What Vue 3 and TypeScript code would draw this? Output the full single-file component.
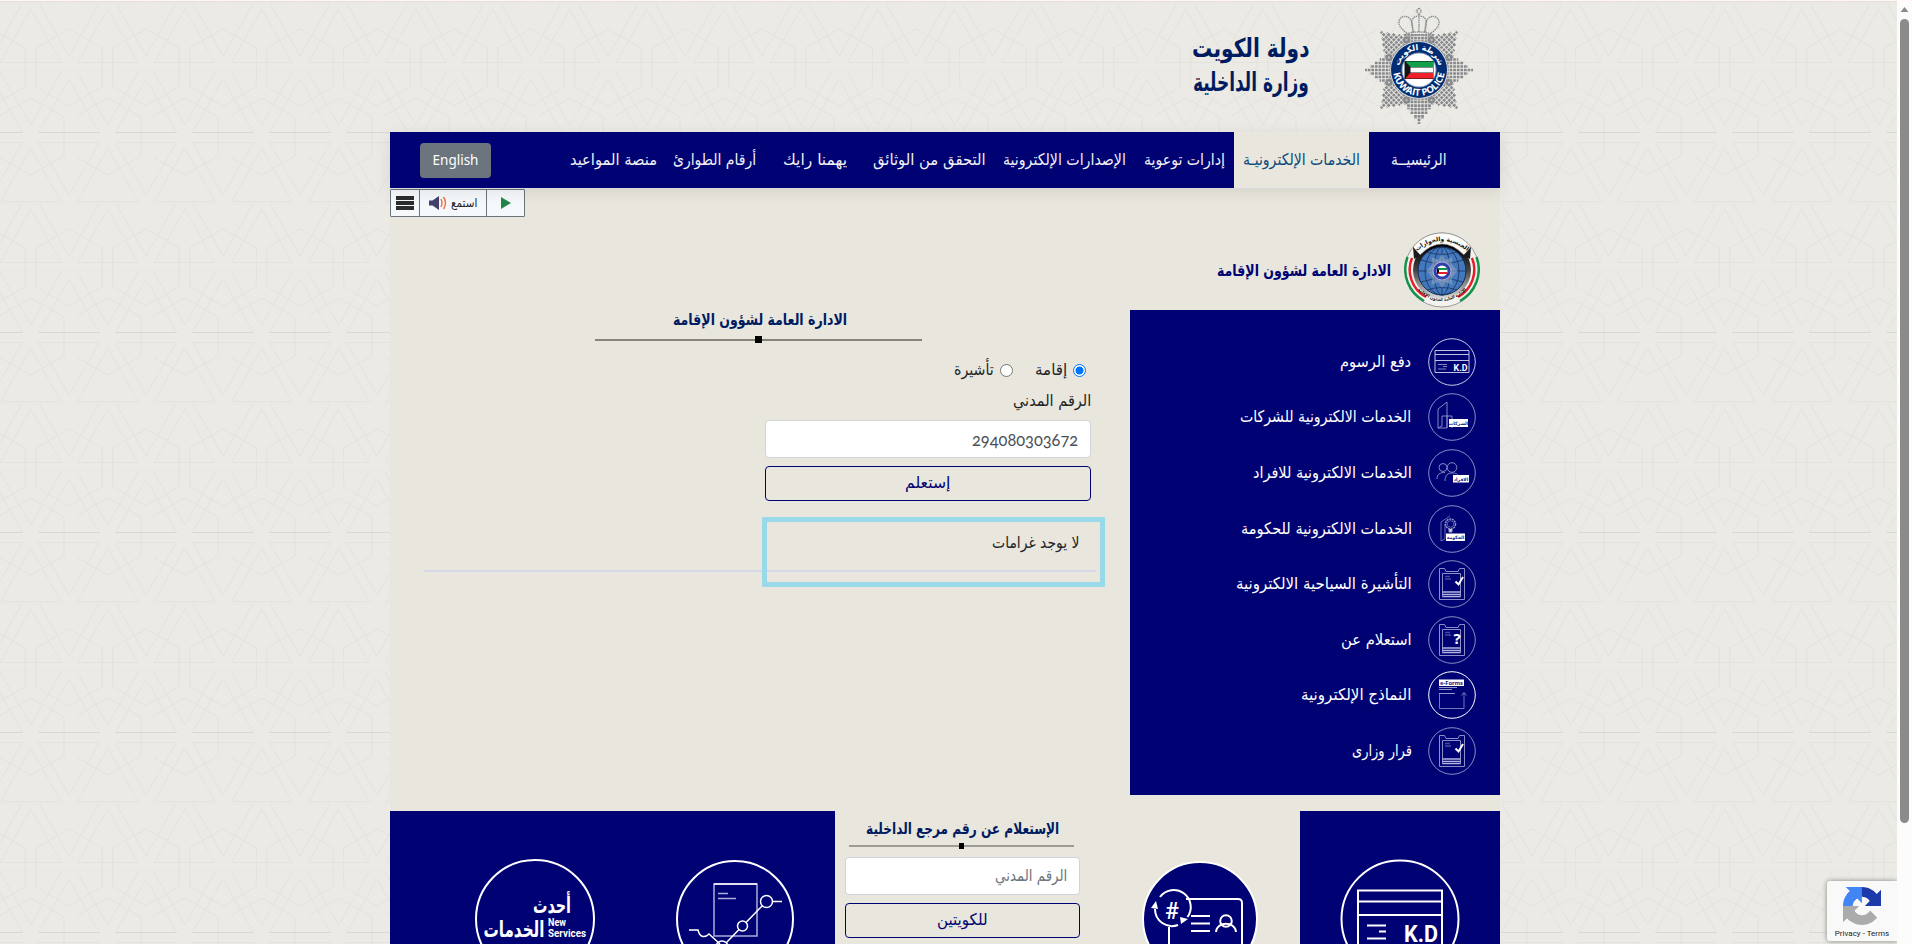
<script setup lang="ts">
import type { Directive } from 'vue'

interface NavItem { text: string; width: number; gap: number; active?: boolean }
interface SideItem { text: string; width: number; icon: string }

/* Condenses a label horizontally to the given pixel width. */
const vFit: Directive<HTMLElement, number> = {
  mounted(el, { value }) {
    const natural = el.offsetWidth
    el.style.transform = `scaleX(${value / natural})`
    el.style.marginLeft = `${value - natural}px`
  },
}

const nav: NavItem[] = [
  { text: 'الرئيسيــة', width: 55, gap: 54 },
  { text: 'الخدمات الإلكترونيـة', width: 117, gap: 22, active: true },
  { text: 'إدارات توعوية', width: 81, gap: 9 },
  { text: 'الإصدارات الإلكترونية', width: 123, gap: 18 },
  { text: 'التحقق من الوثائق', width: 113, gap: 17 },
  { text: 'يهمنا رايك', width: 64, gap: 26 },
  { text: 'أرقام الطوارئ', width: 83, gap: 27 },
  { text: 'منصة المواعيد', width: 87, gap: 16 },
]

const side: SideItem[] = [
  { text: 'دفع الرسوم', width: 71, icon: 'card' },
  { text: 'الخدمات الالكترونية للشركات', width: 171, icon: 'company' },
  { text: 'الخدمات الالكترونية للافراد', width: 159, icon: 'people' },
  { text: 'الخدمات الالكترونية للحكومة', width: 171, icon: 'gov' },
  { text: 'التأشيرة السياحية الالكترونية', width: 176, icon: 'check' },
  { text: 'استعلام عن', width: 71, icon: 'ask' },
  { text: 'النماذج الإلكترونية', width: 110, icon: 'forms' },
  { text: 'قرار وزارى', width: 60, icon: 'check' },
]

const rays: { a: number; x: number; end: number }[] = []
for (let d = 45; d < 360; d += 45)
  for (let k = -4; k <= 4; k++) rays.push({ a: d, x: k * 3.5, end: 54 - Math.abs(k) * 4.9 })
for (let k = -4; k <= 4; k++) rays.push({ a: 0, x: k * 3.5, end: 36 })
</script>

<template>
  <div class="page">
    <svg class="backdrop" width="1897" height="944">
      <defs>
        <g id="motif" fill="none" stroke="#e1e0db" stroke-width=".8">
          <path d="M.5 62.5L30.7 9l30.3 53.5zM39 3.5L69 56 99 3.5M69 29l33.300 19v38.500L69 106 35.700 86.500V48z" />
          <path d="M0 72l30.700 53L61 72M38.500 132.500L69 79l30.500 53.500M30.700 98L64 117v39l-33.300 19L-2.500 156v-39z" />
          <path d="M38.500 142.500h61L69 195zM.5 201.500L30.700 148 61 201.500z" />
          <path d="M38.500 132.500h61" stroke="#d8d8d3" stroke-width="1" />
          <path d="M0 71.500h77M0 203.500h77" stroke="#e7e6e1" />
        </g>
        <pattern id="girih" width="77" height="200" patternUnits="userSpaceOnUse" y="0">
          <use href="#motif" /><use href="#motif" x="-77" /><use href="#motif" y="-200" />
        </pattern>
      </defs>
      <rect width="1897" height="944" fill="url(#girih)" />
    </svg>

    <div class="shell" dir="rtl">
      <header class="head">
        <svg class="star" width="110" height="122" viewBox="-55 -65 110 122">
          <g stroke="#86888c" stroke-width="2.700" stroke-dasharray="2.700 .9">
            <line v-for="(r, i) in rays" :key="i" :x1="r.x" :x2="r.x" y1="-27" :y2="-r.end" :transform="`rotate(${r.a})`" />
          </g>
          <g fill="none" stroke="#8d8f93" stroke-width="1.400" stroke-dasharray="1.500 .7">
            <path d="M-12-37c-5-3-9-8-8-12 2-6 9-6 12-1 2 5 2 9 1 13M12-37c5-3 9-8 8-12-2-6-9-6-12-1-2 5-2 9-1 13M-5-38c-4-9-3-16 5-16s9 7 5 16M0-38v-15M-13-36q13-4 26 0M-13-33q13-4 26 0" />
            <path d="M0-62l2.500 3L0-55l-2.500-4z" />
          </g>
          <circle r="29" fill="#e2e2e0" stroke="#93959a" stroke-dasharray="1 1" />
          <circle r="28" fill="#002d73" /><circle r="17" fill="#fff" stroke="#8aa0c4" />
          <path d="M-14.500-9h29v18h-29z" fill="#151515" />
          <path d="M-13.500-8.500h27.500v5.500h-22.500z" fill="#13a04b" /><path d="M-8.500-2.500h22.500v5h-22.500z" fill="#fff" /><path d="M-9 3h23v5.500h-27.500z" fill="#ef2029" />
          <path id="policeArc" d="M-25.800 0A25.800 25.800 0 0 0 25.800 0" fill="none" /><path id="arabArc" d="M-20 0A20 20 0 0 1 20 0" fill="none" />
          <text class="police"><textPath href="#policeArc" startOffset="50%" text-anchor="middle" textLength="74" lengthAdjust="spacingAndGlyphs">KUWAIT POLICE</textPath></text>
          <text class="police-ar" direction="rtl"><textPath href="#arabArc" startOffset="50%" text-anchor="middle">شرطة الكويت</textPath></text>
        </svg>
        <div class="brand">
          <div><span v-fit="117" class="fit">دولة الكويت</span></div>
          <div><span v-fit="116" class="fit">وزارة الداخلية</span></div>
        </div>
      </header>

      <nav class="nav">
        <a v-for="n in nav" :key="n.text" :class="{ active: n.active }" :style="{ marginRight: n.gap + 'px' }"><span v-fit="n.width" class="fit">{{ n.text }}</span></a>
        <button class="lang">English</button>
      </nav>

      <main class="body">
        <aside class="side-col">
          <div class="dept">
            <svg width="76" height="76" viewBox="-38 -38 76 76">
              <defs>
                <linearGradient id="ringShade" x2="0" y2="1"><stop offset=".1" /><stop offset=".5" stop-color="#444" /><stop offset="1" stop-color="#ddd" /></linearGradient>
              </defs>
              <circle r="37" fill="#f4f3ef" stroke="#777" stroke-width=".7" />
              <path d="M-34.500-13A36 36 0 0 0-18 31M34.500-13A36 36 0 0 1 18 31" fill="none" stroke="#15934a" stroke-width="2.500" />
              <path d="M-30-12A31 31 0 0 0-16 27M30-12A31 31 0 0 1 16 27" fill="none" stroke="#e21f2b" stroke-width="2.500" />
              <circle r="29" fill="url(#ringShade)" />
              <circle cy="1" r="24" fill="#4478bd" stroke="#102b56" />
              <g fill="none" stroke="#16325f" stroke-width=".8"><ellipse cy="1" rx="8" ry="24" /><ellipse cy="1" rx="17" ry="24" /><path d="M0-23v48M-24 1h48M-21-10q21 7 42 0M-21 12q21-7 42 0M-15-18q15 5 30 0M-15 20q15-5 30 0" /></g>
              <path d="M0-16l3.500 6 7-3-1 7 6 7-6 7 1 7-7-3-3.500 6-3.500-6-7 3 1-7-6-7 6-7-1-7 7 3z" fill="#92a5bd" opacity=".6" />
              <circle cy="1" r="9" fill="#3040aa" stroke="#dce" stroke-width=".7" /><circle cy="1" r="5.500" fill="#fff" />
              <path d="M-5-2h10v2H-5z" fill="#15934a" /><path d="M-5 2h10v2H-5z" fill="#e21f2b" /><path d="M-5-2l2 2v2l-2 2z" />
              <path d="M-29-23A37 37 0 0 1 29-23L22-15Q0-37-22-15z" fill="#fbfbf8" stroke="#777" stroke-width=".6" />
              <path d="M-29-23l7 8-6 4zM29-23l-7 8 6 4z" fill="#1a1a1a" />
              <path id="deptTop" d="M-25-19Q0-39 25-19" fill="none" /><path id="deptBottom" d="M-24 20Q0 42 24 20" fill="none" />
              <text class="dept-text" direction="rtl"><textPath href="#deptTop" startOffset="50%" text-anchor="middle">الجنسية والجوازات</textPath></text>
              <text class="dept-text small" direction="rtl"><textPath href="#deptBottom" startOffset="50%" text-anchor="middle">الإدارة العامة لشئون الإقامة</textPath></text>
            </svg>
            <span v-fit="174" class="fit">الادارة العامة لشؤون الإقامة</span>
          </div>
          <ul class="side">
            <li v-for="s in side" :key="s.text">
              <svg width="48" height="48" viewBox="-24 -24 48 48" fill="none" stroke="#bfc1e2">
                <circle r="23.300" :stroke="s.icon === 'forms' ? '#fff' : s.icon === 'card' ? '#c5c7e6' : '#8a8cc4'" />
                <g v-if="s.icon === 'card'"><path d="M-17-11.500h34v22h-34zM-17-7.500h34M-17-1.500h34" /><path d="M-14 2.500h9M-9 4.500h4M-14 7h8" stroke-width=".7" /><text x="1.500" y="8.500" class="ico-kd" textLength="14" lengthAdjust="spacingAndGlyphs">K.D</text></g>
                <g v-else-if="s.icon === 'company'" stroke="#8285c0"><path d="M-14 11V-8L-5-15V11zM-14 11l4-2V-1h10V11M-5-2v13" /><path d="M-3 2h19v8H-3z" fill="#fff" stroke="none" /><text x="6.500" y="8" class="ico-ar" direction="rtl" text-anchor="middle">الشركات</text></g>
                <g v-else-if="s.icon === 'people'" stroke="#8285c0"><circle cx="-9" cy="-5.500" r="4" /><circle cx="0" cy="-5.500" r="4.800" /><path d="M-15 6c0-5 3-6.500 8-6.500M-7 8c0-6 3-8 7-8s6 1 6 3" /><path d="M1 2h16v7.500H1z" fill="#fff" stroke="none" /><text x="9" y="7.500" class="ico-ar" direction="rtl" text-anchor="middle">الافراد</text></g>
                <g v-else-if="s.icon === 'gov'" stroke="#9092c8"><path d="M-11 12V-7L-2-13M-11 12l4-2V-5" stroke-width=".7" /><circle cx="-1.500" cy="-5" r="5" stroke-width="1.500" stroke-dasharray="2 .7" /><circle cx="-1.500" cy="-5" r="3.300" stroke-width=".6" /><path d="M-3 0v3h3V0" fill="#ddd" /><path d="M-6 4.500h19v7.500H-6z" fill="#fff" stroke="none" /><text x="3.500" y="10" class="ico-ar" direction="rtl" text-anchor="middle">الحكومة</text></g>
                <g v-else-if="s.icon === 'forms'" stroke="#9194cb"><path d="M-13-15.500h25v6.500h-25z" fill="#fff" stroke="none" /><text x="-.5" y="-10.200" class="ico-forms" text-anchor="middle" textLength="23" lengthAdjust="spacingAndGlyphs">e-Forms</text><path d="M-13-7.500H5M-13-5.500H0M-13-1.500H3" /><path d="M-12.500-1.500v15H12V-2M9.500.5L12-2.500 14.500.5" stroke-width=".8" /></g>
                <g v-else stroke="#8c8fc7"><path d="M-12.500 15.500v-31h5l1.500 3H6l1.500-3h5v31z" /><path d="M-9.500 12.500v-23H8.500v23z" /><path d="M-7-7.500h5M-7-5h6" stroke-width="1.500" opacity=".5" /><path d="M-9.500 8h18M-9.500 10.300h18M-9.500 12.500h18" stroke-width="1.300" stroke="#b3b5dd" /><path v-if="s.icon === 'check'" d="M3.500-2.500l3 3 4.500-7.500" stroke="#fff" stroke-width="2" /><text v-else x="1.500" y="3.500" class="ico-q">?</text></g>
              </svg>
              <span v-fit="s.width" class="fit">{{ s.text }}</span>
            </li>
          </ul>
        </aside>

        <section class="center">
          <div class="listen">
            <span class="play"><svg width="12" height="14"><path d="M1 1l10 6-10 6z" fill="#23854b" /></svg></span>
            <span class="hear"><b v-fit="26" class="fit">استمع</b><svg width="18" height="14" viewBox="0 0 18 14"><path d="M0 4.500h3.500L10 0v14L3.500 9.500H0z" fill="#43406b" /><path d="M12 3q2 4 0 8M14.500 1q4 6 0 12" fill="none" stroke="#f0764f" stroke-width="1.500" /></svg></span>
            <span class="burger"><i></i><i></i><i></i></span>
          </div>
          <div class="title"><span v-fit="174" class="fit">الادارة العامة لشؤون الإقامة</span></div>
          <div class="rule"><i></i></div>
          <form class="form" @submit.prevent>
            <div class="radios">
              <span class="radio on"></span><span v-fit="32" class="fit">إقامة</span>
              <span class="radio second"></span><span v-fit="40" class="fit">تأشيرة</span>
            </div>
            <div class="label"><span v-fit="78" class="fit">الرقم المدني</span></div>
            <div class="field"><span v-fit="106" class="fit value">294080303672</span></div>
            <button class="btn"><span v-fit="45" class="fit">إستعلم</span></button>
          </form>
          <div class="result">
            <div class="marker"></div>
            <span v-fit="87" class="fit">لا يوجد غرامات</span>
          </div>
        </section>
      </main>

      <footer class="tiles">
        <div class="tile pay">
          <svg width="122" height="122" viewBox="-61 -61 122 122" fill="none" stroke="#fff" stroke-width="2"><circle r="58.500" /><path d="M-42 50V-28.500H42V50M-42-17.500H42M-42-4H42" /><path d="M-33 6.500h19M-21 12.500h7M-33 19.500h19" /><text x="4" y="22.500" class="kd" textLength="34" lengthAdjust="spacingAndGlyphs">K.D</text></svg>
        </div>
        <div class="tile ref">
          <svg width="118" height="118" viewBox="-59 -59 118 118" fill="none" stroke="#fff" stroke-width="2"><circle r="57" fill="#000274" /><path d="M-31 40V8M-14-20H38q4 0 4 4V40M-9-3H10M-9 4.500H10M-9 12H10" /><circle cx="26" cy="2" r="5.800" /><path d="M16 13c1-11 19-11 20 0" /><path d="M-40-22A17 17 0 0 1-12.500-2M-22 6A17 17 0 0 1-45-10" /><path d="M-49-11l5-7 2 8zM-20-2l1 7 7-5z" fill="#fff" stroke="none" /><text x="-28" y="0" class="hash" text-anchor="middle">#</text></svg>
        </div>
        <div class="lookup">
          <div class="title small"><span v-fit="193" class="fit">الإستعلام عن رقم مرجع الداخلية</span></div>
          <div class="rule thin"><i></i></div>
          <div class="field hint"><span v-fit="72" class="fit">الرقم المدني</span></div>
          <button class="btn"><span v-fit="51" class="fit">للكويتين</span></button>
        </div>
        <div class="tile pair">
          <svg width="120" height="120" viewBox="-60 -60 120 120" fill="none" stroke="#fff" stroke-width="1.500"><circle r="58" stroke-width="2" /><path d="M-21-35H22V17H-21z" stroke="#aaacd8" /><path d="M-21-35H22" /><path d="M-17-25.500h10M-17-20.500H1" stroke="#aaacd8" /><circle cx="31.500" cy="-17.500" r="6" /><circle cx="7.500" cy="7" r="5" /><path d="M37.500-17.500H47M27-13L11 3.500M4 10.500L-9 24M-46 11h9c2 9 8 7 11 4l11 10" /><circle cx="-13" cy="28" r="6" /></svg>
          <svg width="122" height="122" viewBox="-61 -61 122 122" fill="none" stroke="#fff" stroke-width="2"><circle r="59" /><text x="17" y="-6" class="new-ar" direction="rtl" text-anchor="middle" textLength="38" lengthAdjust="spacingAndGlyphs">أحدث</text><text x="-21" y="18" class="new-ar" direction="rtl" text-anchor="middle" textLength="61" lengthAdjust="spacingAndGlyphs">الخدمات</text><text x="13" y="7" class="new-en" textLength="18" lengthAdjust="spacingAndGlyphs">New</text><text x="13" y="18" class="new-en" textLength="38" lengthAdjust="spacingAndGlyphs">Services</text></svg>
        </div>
      </footer>
    </div>

    <div class="captcha">
      <svg width="38" height="38" viewBox="0 0 64 64"><path fill="#1c3aa9" d="M64 31.955l-.033-1.370V4.687l-7.160 7.160C50.948 4.674 42.033.093 32.050.093c-10.400 0-19.622 4.960-25.458 12.640l11.736 11.860a15.550 15.550 0 0 1 4.754-5.334c2.050-1.600 4.952-2.906 8.968-2.906.485 0 .860.057 1.135.163 4.976.393 9.288 3.140 11.828 7.124l-8.307 8.307L64 31.953" /><path fill="#4285f4" d="M31.862.094l-1.370.033H4.594l7.160 7.160C4.580 13.147 0 22.060 0 32.046c0 10.400 4.960 19.622 12.640 25.458L24.500 45.768a15.550 15.550 0 0 1-5.334-4.754c-1.600-2.050-2.906-4.952-2.906-8.968 0-.485.057-.860.163-1.135.393-4.976 3.140-9.288 7.124-11.828l8.307 8.307L31.860.095" /><path fill="#ababab" d="M.001 32.045l.033 1.370v25.898l7.160-7.160c5.860 7.173 14.774 11.754 24.760 11.754 10.400 0 19.622-4.960 25.458-12.640l-11.736-11.860a15.550 15.550 0 0 1-4.754 5.334c-2.050 1.600-4.952 2.906-8.968 2.906-.485 0-.860-.057-1.135-.163-4.976-.393-9.288-3.140-11.828-7.124l8.307-8.307c-10.522.040-22.400.066-27.295-.005" /></svg>
      <span>Privacy - Terms</span>
    </div>
    <div class="scroll"><svg width="15" height="18"><path d="M7.500 6l4 5h-8z" fill="#8b8b8b" /></svg><i></i></div>
  </div>
</template>

<style>
body { margin: 0; overflow: hidden; }
</style>

<style scoped>
.page { position: relative; width: 1912px; height: 944px; overflow: hidden; background: #ebeae4; font: 16px/20px "DejaVu Sans", "Noto Sans", sans-serif; color: #222529; box-sizing: border-box; border-top: 1px solid #fff6f5; }
.page::before { content: ""; position: absolute; inset: 0 0 auto; height: 1px; background: #f0dcdb; }
.page *, .page *::before { box-sizing: border-box; }
.page svg { direction: ltr; }
.page svg text[direction="rtl"] { direction: rtl; }
.backdrop { position: absolute; left: 0; top: -1px; }
.fit { display: inline-block; flex: none; white-space: nowrap; transform-origin: 100% 50%; }
.shell { position: relative; width: 1110px; height: 943px; margin-left: 390px; display: flex; flex-direction: column; }
.head { height: 131px; flex: none; display: flex; align-items: flex-start; padding: 4px 26px 0 0; }
.star { flex: none; }
.police { font: bold 9.500px "Open Sans", sans-serif; fill: #fff; }
.police-ar { font: bold 8px "DejaVu Sans", sans-serif; fill: #fff; }
.brand { margin: 26px 55px 0 0; font-size: 26px; font-weight: bold; line-height: 34px; color: #001c61; }
.nav { position: relative; z-index: 2; height: 56px; flex: none; background: #000274; display: flex; color: #f1f1f5; box-shadow: 0 4px 16px rgba(0, 0, 0, .09); }
.nav a { display: flex; align-items: center; flex: none; padding-bottom: 1px; }
.nav .active { background: #e9e6dd; color: #0b4a7d; padding-inline: 9px; }
.lang { width: 71px; height: 35px; margin: 11px auto 0 30px; padding: 0 0 2px; border: 0; border-radius: 4px; background: #6c757d; color: #fff; font: 13.500px "Noto Sans", sans-serif; }
.body { height: 623px; flex: none; background: #e9e6dd; border-top: 1px solid #e9e9e9; display: flex; }
.side-col { width: 370px; flex: none; }
.dept { height: 121px; display: flex; align-items: center; gap: 13px; padding: 40px 20px 0 0; color: #000274; font-weight: bold; }
.dept .fit { margin-top: 2px; }
.dept-text { font: bold 6px "DejaVu Sans", sans-serif; fill: #111; }
.dept-text.small { font-size: 4px; }
.side { list-style: none; margin: 0; padding: 24px 24px 0 0; height: 485px; background: #000274; color: #fff; }
.side li { height: 55.600px; display: flex; align-items: center; gap: 16.500px; }
.side svg { flex: none; }
.ico-kd { font: bold 8.500px Roboto, sans-serif; fill: #fff; stroke: none; }
.ico-ar { font: bold 4.500px "DejaVu Sans", sans-serif; fill: #151780; stroke: none; }
.ico-forms { font: bold 6px "Noto Sans", sans-serif; fill: #151780; stroke: none; }
.ico-q { font: bold 15px "Noto Sans", sans-serif; fill: #fff; stroke: none; }
.center { width: 740px; }
.listen { width: 135px; height: 28px; margin-right: 605px; border: 1px solid #6b737c; border-radius: 1px; background: #f6f9fc; display: flex; color: #222; }
.listen > span { display: flex; align-items: center; justify-content: center; border-left: 1px solid #6b737c; height: 26px; }
.play { width: 38px; }
.hear { width: 67px; gap: 4px; font-size: 12px; }
.hear b { font-weight: normal; }
.listen .burger { flex: 1; border: 0; flex-direction: column; gap: 1px; }
.burger i { width: 18px; height: 4px; background: #2c2d2f; }
.title { text-align: center; height: 20px; margin-top: 93px; color: #001c61; font-weight: bold; }
.rule { width: 327px; height: 7px; margin: 6px 208px 0 0; display: flex; align-items: center; justify-content: center; background: linear-gradient(#85837c, #85837c) center / 100% 2px no-repeat; }
.rule i { width: 7px; height: 7px; background: #000; }
.form { width: 326px; margin: 17px 39px 0 0; }
.radios { display: flex; align-items: center; height: 20px; padding-right: 5px; }
.radio { width: 13px; height: 13px; margin-left: 6px; border: 1px solid #767676; border-radius: 50%; background: #fff; }
.radio.on { border: 1px solid #0075ff; background: radial-gradient(circle, #0075ff 0 3.700px, #fff 4.300px); }
.radio.second { margin-right: 22px; }
.label { height: 20px; margin-top: 11px; }
.field { height: 38px; padding: 0 12px; border: 1px solid #ced4da; border-radius: 4px; background: #fff; display: flex; align-items: center; }
.label + .field { margin-top: 9px; }
.value { font: 17px Lato, sans-serif; font-feature-settings: "onum"; color: #495057; }
.btn { display: block; width: 100%; height: 35px; margin-top: 8px; padding: 0 0 2px; border: 1px solid #000274; border-radius: 4px; background: transparent; color: #000274; font: 16px/20px "DejaVu Sans", sans-serif; text-align: center; }
.result { position: relative; width: 672px; height: 55px; margin: 16px 34px 0 0; padding: 16px 17px 0 0; border-bottom: 2px solid #d5d8e6; }
.marker { position: absolute; right: -9px; top: 0; width: 343px; height: 70px; border: 5px solid #9ad9ea; }
.tiles { flex: 1; background: #e9e6dd; display: flex; min-height: 0; }
.tile { flex: none; display: flex; justify-content: center; align-items: flex-start; overflow: hidden; }
.pay { width: 200px; background: #000274; padding: 47px 1px 0 0; }
.ref { width: 201px; padding-top: 49px; }
.lookup { width: 235px; margin-right: 19px; }
.title.small { margin-top: 8px; padding-left: 1px; }
.lookup .title { white-space: nowrap; }
.rule.thin { width: 225px; height: 6px; margin: 4px 6px 0 0; background-image: linear-gradient(#9d9b94, #9d9b94); }
.thin i { width: 5px; height: 6px; }
.field.hint { margin-top: 8px; color: #6c757d; }
.pair { width: 445px; margin-right: 10px; background: #000274; gap: 79px; padding: 48px 40px 0 5px; justify-content: flex-start; }
.pair svg + svg { margin-top: -1px; }
.kd { font: bold 23px Roboto, sans-serif; fill: #fff; stroke: none; }
.hash { font: 500 23px Roboto, sans-serif; fill: #fff; stroke: none; }
.new-ar { font: bold 22px "DejaVu Sans", sans-serif; fill: #fff; stroke: none; }
.new-en { font: bold 11px Roboto, sans-serif; fill: #fff; stroke: none; }
.captcha { position: absolute; left: 1827px; top: 880px; width: 70px; height: 60px; background: #f9f9f9; border-radius: 3px 0 0 3px; box-shadow: 0 0 5px gray; clip-path: inset(-6px 0 -6px -6px); display: flex; flex-direction: column; align-items: center; padding-top: 6px; font: 8px/18px Roboto, sans-serif; color: #222; white-space: nowrap; }
.captcha svg { flex: none; }
.scroll { position: absolute; right: 0; top: 0; width: 15px; height: 943px; background: #fcfcfc; display: flex; flex-direction: column; align-items: center; }
.scroll i { width: 9px; height: 804px; border-radius: 5px; background: #8b8b8b; }
</style>
